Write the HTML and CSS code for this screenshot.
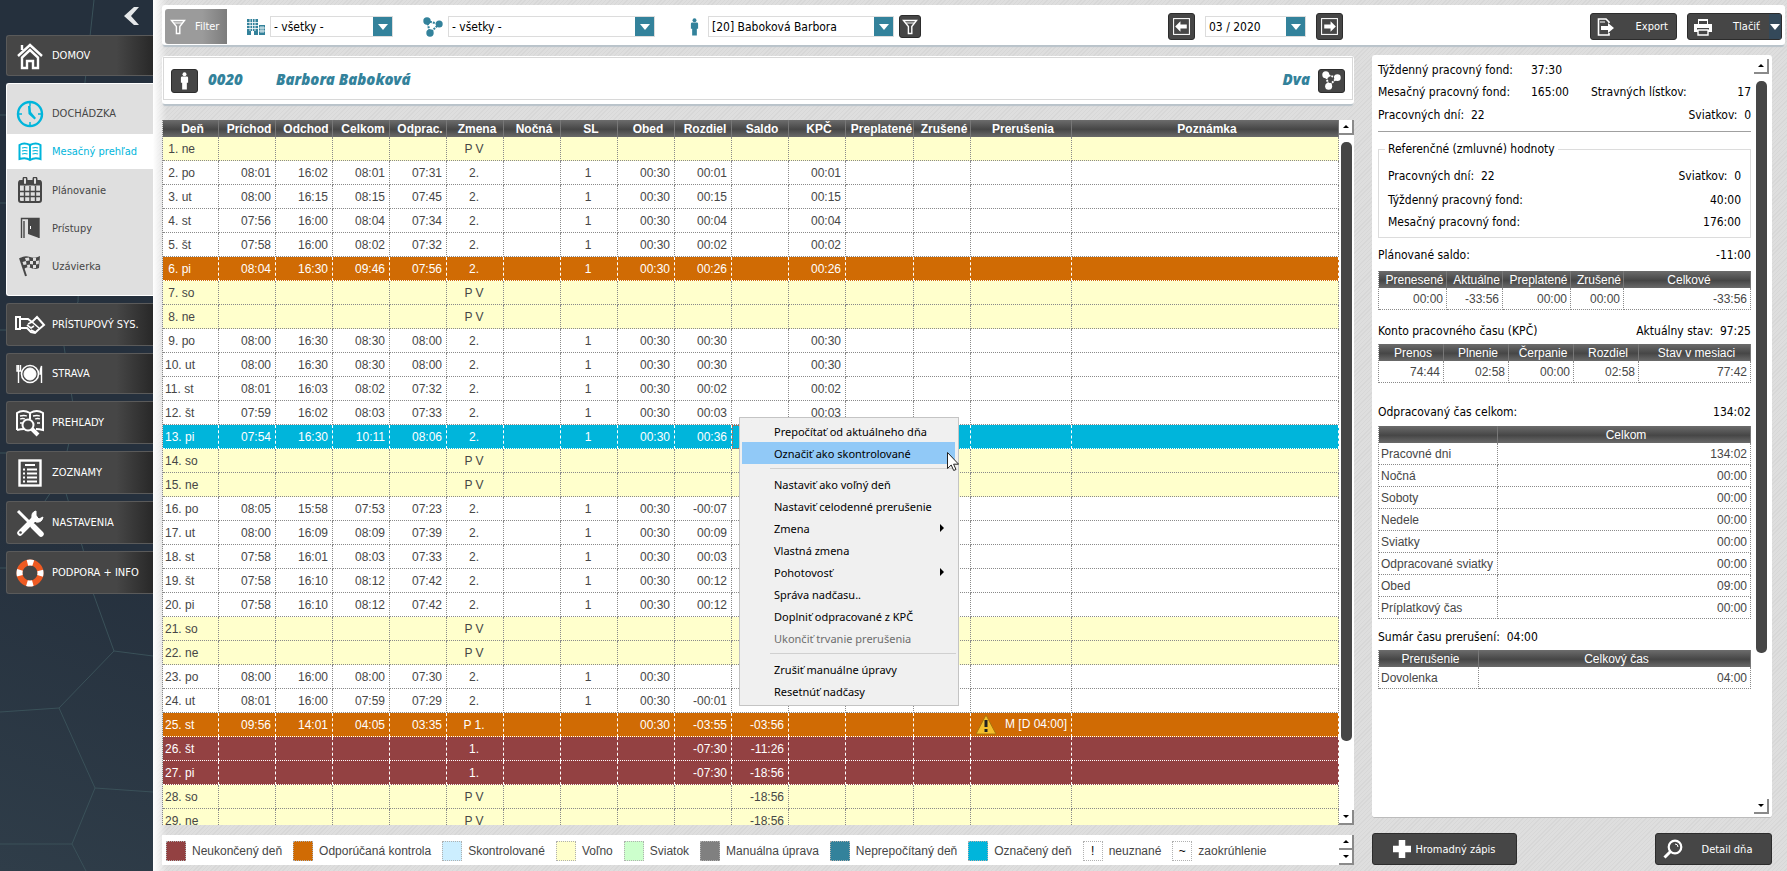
FILE: index.html
```html
<!DOCTYPE html>
<html lang="sk">
<head>
    <meta charset="UTF-8">
    <title>Mesačný prehľad</title>
    <link rel="stylesheet" href="styles.css">
    <script src="script.js" defer></script>
</head>
<body>
    <svg class="symbols" width="0" height="0">
        <symbol id="funnel" viewBox="0 0 16 16">
            <path d="M1.5 1.5h13L9.8 7.5v7H6.4v-7z" fill="none" stroke="currentColor" stroke-width="1.4"/>
            <path d="M4 4h8" stroke="currentColor" stroke-width="1"/>
        </symbol>
        <symbol id="person" viewBox="0 0 10 20">
            <circle cx="5" cy="2.4" r="2.2" fill="currentColor"/>
            <path d="M2.5 5h5Q9 5 9 6.500V12H7.600V19.500H2.400V12H1V6.500Q1 5 2.500 5z" fill="currentColor"/>
        </symbol>
        <symbol id="nodes" viewBox="0 0 20 20">
            <path d="M4 4L16 7L7 16L4 4" fill="none" stroke="currentColor" stroke-width="2" stroke-dasharray="2 1"/>
            <circle cx="4" cy="4" r="3.700" fill="currentColor"/>
            <circle cx="16.200" cy="7" r="3.500" fill="currentColor"/>
            <circle cx="7" cy="16" r="3.700" fill="currentColor"/>
        </symbol>
        <symbol id="arrow" viewBox="0 0 18 18">
            <rect x="1.500" y="1.500" width="15" height="15" fill="none" stroke="currentColor"/>
            <path d="M3 9l5-5v3h6v4H8v3z" fill="currentColor"/>
        </symbol>
    </svg>

    <div class="app">
        <nav class="sidebar">
            <svg class="pattern" width="153" height="871" viewBox="0 0 153 871">
                <path d="M94 0l-9 82-7 220-17 25 14 90-14 60-20 30M61 477l22 72 10 45M0 115h10M0 203h8M0 330h12M0 453h10M0 568h12M92 590l22 61 39 5M114 651l-55 57 36 80-23 56 14 27M0 712l59-4M95 788l58 4M0 844h72"/>
            </svg>
            <button class="collapse" aria-label="Skryť menu">
                <svg width="16" height="18" viewBox="0 0 16 18"><path d="M15 0H10L0 9l10 9h5L7 9z" fill="#e6e8ea"/></svg>
            </button>

            <a href="#" class="item short">
                <svg width="28" height="28" viewBox="0 0 28 28" fill="none" stroke="#fff" stroke-width="2.400">
                    <path d="M2 14L14 3l12 11M6 8V3M14 8L6 15.500V26h5v-7h6v7h5V15.500z"/>
                </svg>
                <span>DOMOV</span>
            </a>

            <div class="group">
                <a href="#" class="grouphead">
                    <svg width="28" height="28" viewBox="0 0 28 28" fill="none" stroke="#00b5db" stroke-width="2.400">
                        <circle cx="14" cy="14" r="12"/>
                        <path d="M14 2v4M14 22v4M2 14h4M22 14h4" stroke-width="1.500"/>
                        <path d="M12 6h2.500l.5 6 5 6-1.500 1.500L12.500 14z" fill="#00b5db" stroke="none"/>
                    </svg>
                    <span>DOCHÁDZKA</span>
                </a>
                <a href="#" class="sub active">
                    <svg width="24" height="20" viewBox="0 0 24 20" fill="none" stroke="currentColor" stroke-width="2">
                        <path d="M1.500 17V3Q6 0 12 3 18 0 22.500 3v14q-6-2-10.500 1Q8 15 1.500 17zM12 3v14"/>
                        <path d="M4 6q3-1 5.500 0M4 9q3-1 5.500 0M4 12q3-1 5.500 0M14.500 6q3-1 5.500 0M14.500 9q3-1 5.500 0M14.500 12q3-1 5.500 0" stroke-width="1.200"/>
                    </svg>
                    <span>Mesačný prehľad</span>
                </a>
                <a href="#" class="sub">
                    <svg width="24" height="26" viewBox="0 0 24 26" fill="none" stroke="#464646">
                        <rect x="1" y="4" width="22" height="21" rx="2" stroke-width="2"/>
                        <path d="M1 6h22" stroke-width="5"/>
                        <path d="M1 14.500h22M1 19.500h22M6.500 9v16M12 9v16M17.500 9v16" stroke-width="1.400"/>
                        <path d="M7 2v4M17 2v4" stroke-width="5" stroke-linecap="round"/>
                        <path d="M7 2v4M17 2v4" stroke="#dfdfdf" stroke-width="2" stroke-linecap="round"/>
                    </svg>
                    <span>Plánovanie</span>
                </a>
                <a href="#" class="sub">
                    <svg width="24" height="22" viewBox="0 0 24 22">
                        <path d="M3.500 21V1.500H21V21M6 21V4" fill="none" stroke="#464646" stroke-width="1.400"/>
                        <path d="M10 2h11v19l-11-4z" fill="#464646"/><path d="M12.500 9v3" stroke="#fff"/>
                    </svg>
                    <span>Prístupy</span>
                </a>
                <a href="#" class="sub">
                    <svg width="24" height="22" viewBox="0 0 24 22">
                        <path d="M2 3q5-3 10-1t10-1l-1 12q-4 2-8 0t-7 1z" fill="#464646"/>
                        <path d="M2 3l6 18" stroke="#464646" stroke-width="2"/>
                        <path d="M7 3l4-.5.5 3L8 6zM15 3l3-.3v3l-3 .3zM4.500 7L8 6l.5 3.500-3 .5zM12 6h3v3.500l-3-.5zM18 6l3-.5-.3 3.500-2.700.5zM9 10l3-.5v3L9.500 13zM15 10h3v3l-3 .5z" fill="#dfdfdf"/>
                    </svg>
                    <span>Uzávierka</span>
                </a>
            </div>

            <a href="#" class="item">
                <svg width="32" height="20" viewBox="0 0 32 20" fill="none" stroke="#fff" stroke-width="2">
                    <path d="M2 2h4v12H2zM6 4h8l4 3 5-5 7 8-6 5-3 3-4-1-4-4H6"/>
                    <path d="M14 9l4-2 7 6M13 10l4 3 3-2M17 15l4 2" stroke-width="1.600"/>
                </svg>
                <span>PRÍSTUPOVÝ SYS.</span>
            </a>
            <a href="#" class="item short">
                <svg width="28" height="20" viewBox="0 0 28 20" fill="none" stroke="#fff">
                    <circle cx="14" cy="10" r="8.500" stroke-width="1.600"/><circle cx="14" cy="10" r="6" fill="#fff"/>
                    <path d="M2.500 1v18M1 1v6h3.500V1M25.500 19V2q-1.500 3-1.500 8h2" stroke-width="1.400"/>
                </svg>
                <span>STRAVA</span>
            </a>
            <a href="#" class="item">
                <svg width="30" height="28" viewBox="0 0 30 28" fill="none" stroke="#fff" stroke-width="2">
                    <path d="M2 21V4q6-4 13 0 7-4 13 0v17q-4-1-7-1M2 21q4-1 7-1M15 4v6"/>
                    <path d="M5 7q4-1 7 0M5 10q3-1 5 0M18 7q4-1 7 0M20 10q3-1 5 0M22 14h3M5 14h2" stroke-width="1.300"/>
                    <circle cx="13" cy="16" r="5.500"/><path d="M17 20l6 6" stroke-width="4"/>
                </svg>
                <span>PREHĽADY</span>
            </a>
            <a href="#" class="item">
                <svg width="24" height="28" viewBox="0 0 24 28" fill="none" stroke="#fff">
                    <rect x="1.500" y="1.500" width="21" height="25" stroke-width="2.400"/>
                    <path d="M7 6h10M9 10.500h10M9 14.500h10M9 18.500h10M9 22.500h10M5 10.500h2M5 14.500h2M5 18.500h2M5 22.500h2" stroke-width="2"/>
                </svg>
                <span>ZOZNAMY</span>
            </a>
            <a href="#" class="item">
                <svg width="28" height="28" viewBox="0 0 28 28" fill="none" stroke="#fff">
                    <path d="M2 2l13 13" stroke-width="3"/><path d="M17 17l8 8" stroke-width="5.500" stroke-linecap="round"/>
                    <path d="M4 24L19 9" stroke-width="5.500" stroke-linecap="round"/>
                    <path d="M20 2q-5 1-4 7l4 4q6 1 7-5l-4 2-3-3z" fill="#fff"/>
                    <circle cx="4.500" cy="23.500" r="1.300" fill="#464646" stroke="none"/>
                </svg>
                <span>NASTAVENIA</span>
            </a>
            <a href="#" class="item">
                <svg width="28" height="28" viewBox="0 0 28 28" fill="none" stroke-width="6">
                    <circle cx="14" cy="14" r="10.500" stroke="#ee5a22"/>
                    <circle cx="14" cy="14" r="10.500" stroke="#fff" stroke-dasharray="6 10.500" stroke-dashoffset="3"/>
                </svg>
                <span>PODPORA + INFO</span>
            </a>
        </nav>

        <main class="main">
            <header class="topbar">
                <button class="filter"><svg width="16" height="16"><use href="#funnel"/></svg>Filter</button>
                <label class="pick pick1">
                    <svg width="18" height="16" viewBox="0 0 18 16">
                        <path d="M0 0h11v16H0zM12 6h6v10h-6z" fill="#33829b"/>
                        <path d="M0 3.500h11M0 6.500h11M0 9.500h11M12 9h6M12 12h6M3 0v12M5.500 0v12M8 0v12M14 7v7M16 7v7" stroke="#fff" stroke-width=".8"/>
                        <path d="M4 12h3v4H4z" fill="#fff"/>
                    </svg>
                    <span class="combo"><select aria-label="Stredisko"><option>- všetky -</option></select><i></i></span>
                </label>
                <label class="pick pick2">
                    <svg width="20" height="20"><use href="#nodes"/></svg>
                    <span class="combo"><select aria-label="Skupina"><option>- všetky -</option></select><i></i></span>
                </label>
                <label class="pick pick3">
                    <svg width="9" height="18"><use href="#person"/></svg>
                    <span class="combo"><select aria-label="Osoba"><option>[20] Baboková Barbora</option></select><i></i></span>
                </label>
                <button class="dark funnelbtn" aria-label="Filtrovať"><svg width="16" height="16"><use href="#funnel"/></svg></button>
                <div class="month">
                    <button class="dark square" aria-label="Predchádzajúci mesiac"><svg width="19" height="19"><use href="#arrow"/></svg></button>
                    <span class="combo"><select aria-label="Mesiac"><option>03 / 2020</option></select><i></i></span>
                    <button class="dark square next" aria-label="Ďalší mesiac"><svg width="19" height="19"><use href="#arrow"/></svg></button>
                </div>
                <div class="actions">
                    <button class="dark export">
                        <svg width="18" height="18" viewBox="0 0 18 18">
                            <path d="M12 5V4L9 1H1.500v16H12v-2" fill="none" stroke="#fff" stroke-width="1.600"/><path d="M3 4h5" stroke="#fff"/>
                            <path d="M4 8h7V5l6 5-6 5v-3H4z" fill="#fff"/>
                        </svg>
                        <span>Export</span>
                    </button>
                    <button class="dark print">
                        <svg width="18" height="18" viewBox="0 0 18 18">
                            <path d="M4 1h10v5H4zM0 6h18v8H0z" fill="#fff"/><path d="M5 3h8v3H5zM3 10h12v2H3z" fill="#464646"/><path d="M4 12h10v5H4z" fill="#464646" stroke="#fff" stroke-width="1.400"/>
                        </svg>
                        <span>Tlačiť</span>
                        <i></i>
                    </button>
                </div>
            </header>

            <div class="content">
                <section class="month-view">
                    <div class="namecard">
                        <div class="inner">
                            <button class="dark small" aria-label="Osoba"><svg width="9" height="18"><use href="#person"/></svg></button>
                            <b class="number">0020</b>
                            <b>Barbora Baboková</b>
                            <b class="shift">Dva</b>
                            <button class="dark small" aria-label="Skupina"><svg width="19" height="19"><use href="#nodes"/></svg></button>
                        </div>
                    </div>

                    <div class="sheet">
                        <div class="rows">
                            <table class="days">
                                <colgroup>
                                    <col class="w56"><col span="11" class="w57"><col class="w68"><col class="w57"><col class="w101"><col>
                                </colgroup>
                                <thead>
                                    <tr>
                                        <th>Deň</th><th>Príchod</th><th>Odchod</th><th>Celkom</th><th>Odprac.</th><th>Zmena</th><th>Nočná</th><th>SL</th>
                                        <th>Obed</th><th>Rozdiel</th><th>Saldo</th><th>KPČ</th><th>Preplatené</th><th>Zrušené</th><th>Prerušenia</th><th>Poznámka</th>
                                    </tr>
                                </thead>
                                <tbody id="days"></tbody>
                            </table>
                        </div>
                        <div class="scroll">
                            <span class="sbtn up"></span>
                            <span class="thumb"></span>
                            <span class="sbtn down"></span>
                        </div>

                        <div class="menu" role="menu">
                            <button role="menuitem">Prepočítať od aktuálneho dňa</button>
                            <button role="menuitem" class="hot">Označiť ako skontrolované</button>
                            <hr>
                            <button role="menuitem">Nastaviť ako voľný deň</button>
                            <button role="menuitem">Nastaviť celodenné prerušenie</button>
                            <button role="menuitem" class="more">Zmena</button>
                            <button role="menuitem">Vlastná zmena</button>
                            <button role="menuitem" class="more">Pohotovosť</button>
                            <button role="menuitem">Správa nadčasu..</button>
                            <button role="menuitem">Doplniť odpracované z KPČ</button>
                            <button role="menuitem" disabled>Ukončiť trvanie prerušenia</button>
                            <hr>
                            <button role="menuitem">Zrušiť manuálne úpravy</button>
                            <button role="menuitem">Resetnúť nadčasy</button>
                            <svg class="pointer" width="12" height="19" viewBox="0 0 12 19"><path d="M.5.5v16l3.700-3.500 2.500 5.500 2.300-1-2.400-5.300h5z" fill="#fff" stroke="#222"/></svg>
                        </div>
                    </div>

                    <footer class="legend">
                        <ul>
                            <li><i class="unfinished"></i>Neukončený deň</li>
                            <li><i class="check"></i>Odporúčaná kontrola</li>
                            <li><i class="checked"></i>Skontrolované</li>
                            <li><i class="free"></i>Voľno</li>
                            <li><i class="holiday"></i>Sviatok</li>
                            <li><i class="manual"></i>Manuálna úprava</li>
                            <li><i class="recalc"></i>Neprepočítaný deň</li>
                            <li><i class="selected"></i>Označený deň</li>
                            <li><i>!</i>neuznané</li>
                            <li><i>~</i>zaokrúhlenie</li>
                        </ul>
                        <div class="scroll"><span class="sbtn up"></span><span class="sbtn down"></span></div>
                    </footer>
                </section>

                <aside class="summary">
                    <div class="panel">
                        <div class="info">
                            <p><span class="lead">Týždenný pracovný fond:</span><span>37:30</span></p>
                            <p><span class="lead">Mesačný pracovný fond:</span><span class="fund">165:00</span><span>Stravných lístkov:</span><span class="end">17</span></p>
                            <p class="tall"><span>Pracovných dní:&nbsp; 22</span><span class="end">Sviatkov:&nbsp; 0</span></p>
                            <fieldset>
                                <legend>Referenčné (zmluvné) hodnoty</legend>
                                <p class="tall"><span>Pracovných dní:&nbsp; 22</span><span class="end">Sviatkov:&nbsp; 0</span></p>
                                <p><span>Týždenný pracovný fond:</span><span class="end">40:00</span></p>
                                <p><span>Mesačný pracovný fond:</span><span class="end">176:00</span></p>
                            </fieldset>
                            <p class="head"><span>Plánované saldo:</span><span class="end">-11:00</span></p>
                            <table>
                                <colgroup><col class="w68"><col class="w56"><col class="w68"><col class="w53"><col></colgroup>
                                <tr><th>Prenesené</th><th>Aktuálne</th><th>Preplatené</th><th>Zrušené</th><th>Celkové</th></tr>
                                <tr><td>00:00</td><td>-33:56</td><td>00:00</td><td>00:00</td><td>-33:56</td></tr>
                            </table>
                            <p class="head kpc"><span>Konto pracovného času (KPČ)</span><span class="end">Aktuálny stav:&nbsp; 97:25</span></p>
                            <table>
                                <colgroup><col span="4" class="w65"><col></colgroup>
                                <tr><th>Prenos</th><th>Plnenie</th><th>Čerpanie</th><th>Rozdiel</th><th>Stav v mesiaci</th></tr>
                                <tr><td>74:44</td><td>02:58</td><td>00:00</td><td>02:58</td><td>77:42</td></tr>
                            </table>
                            <p class="head worked"><span>Odpracovaný čas celkom:</span><span class="end">134:02</span></p>
                            <table class="named">
                                <colgroup><col class="w119"><col></colgroup>
                                <tr><th></th><th>Celkom</th></tr>
                                <tr><td>Pracovné dni</td><td>134:02</td></tr>
                                <tr><td>Nočná</td><td>00:00</td></tr>
                                <tr><td>Soboty</td><td>00:00</td></tr>
                                <tr><td>Nedele</td><td>00:00</td></tr>
                                <tr><td>Sviatky</td><td>00:00</td></tr>
                                <tr><td>Odpracované sviatky</td><td>00:00</td></tr>
                                <tr><td>Obed</td><td>09:00</td></tr>
                                <tr><td>Príplatkový čas</td><td>00:00</td></tr>
                            </table>
                            <p class="head breaks"><span>Sumár času prerušení:&nbsp; 04:00</span></p>
                            <table class="named">
                                <colgroup><col class="w100"><col></colgroup>
                                <tr><th>Prerušenie</th><th>Celkový čas</th></tr>
                                <tr><td>Dovolenka</td><td>04:00</td></tr>
                            </table>
                        </div>
                        <div class="scroll">
                            <span class="sbtn up"></span>
                            <span class="thumb"></span>
                            <span class="sbtn down"></span>
                        </div>
                    </div>
                    <div class="buttons">
                        <button class="dark bulk">
                            <svg width="18" height="18" viewBox="0 0 18 18"><path d="M9 0v18M0 9h18" stroke="#fff" stroke-width="6.500"/></svg>
                            Hromadný zápis
                        </button>
                        <button class="dark detail">
                            <svg width="20" height="20" viewBox="0 0 20 20" fill="none" stroke="#fff">
                                <circle cx="12" cy="8" r="6.300" stroke-width="2.200"/><path d="M7.500 12.500L1.500 18.500" stroke-width="3"/><path d="M12 5q3 0 3 3"/>
                            </svg>
                            <span>Detail dňa</span>
                        </button>
                    </div>
                </aside>
            </div>
        </main>
    </div>
</body>
</html>
```
FILE: styles.css
```css
* {
    box-sizing: border-box;
}

body {
    margin: 0;
    font-family: Tahoma, "DejaVu Sans Condensed", "Noto Sans", sans-serif;
    font-size: 12px;
    color: #000;
}

button, select {
    font: inherit;
    margin: 0;
    padding: 0;
    border: none;
}

a {
    text-decoration: none;
    color: inherit;
}

svg {
    flex: none;
}

.symbols {
    position: absolute;
}

.app {
    display: flex;
    height: 100vh;
    overflow: hidden;
}

/* sidebar */
.sidebar {
    position: relative;
    flex: none;
    width: 153px;
    padding-left: 6px;
    background: linear-gradient(20deg, #2f3d49, #25303d 40%);
    font-size: 11px;
    overflow: hidden;
}

.pattern {
    position: absolute;
    left: 0;
    top: 0;
    fill: none;
    stroke: #3a5159;
}

.collapse {
    position: relative;
    display: block;
    height: 35px;
    padding-right: 13px;
    margin-left: auto;
    background: none;
}

.item {
    position: relative;
    display: flex;
    align-items: center;
    height: 43px;
    margin-bottom: 7px;
    border: 1px solid #5a5a5a;
    border-right: none;
    border-radius: 3px 0 0 3px;
    background: linear-gradient(to right, #464646 75%, #282828);
    color: #fff;
}

.item.short {
    height: 41px;
}

.item svg, .group svg {
    margin: 0 auto;
}

.item span, .group span {
    width: 101px;
    white-space: nowrap;
}

.group {
    position: relative;
    height: 213px;
    margin-bottom: 7px;
    border: 1px solid #fff;
    border-right: none;
    border-radius: 3px 0 0 3px;
    background: #dfdfdf;
    color: #464646;
}

.grouphead, .sub {
    display: flex;
    align-items: center;
    height: 38px;
}

.grouphead {
    height: 50px;
    padding-top: 9px;
}

.sub.active {
    height: 35px;
    margin-bottom: 2px;
    background: #fff;
    color: #00b5db;
}

/* main area */
.main {
    flex: 1;
    min-width: 0;
    display: flex;
    flex-direction: column;
    padding: 5px 2px 6px 9px;
    background:
        linear-gradient(to right, #fff, rgba(255, 255, 255, 0) 14px),
        repeating-linear-gradient(135deg, #dedede 0, #dedede 2px, #d7d7d7 2px, #d7d7d7 3px);
}

.topbar {
    flex: none;
    display: flex;
    align-items: center;
    height: 40px;
    padding: 3px 3px 0;
    background: #fff;
    border-radius: 3px;
    box-shadow: 0 3px 1px -1px #b9c3ca;
}

.filter {
    display: flex;
    align-items: center;
    gap: 9px;
    width: 62px;
    height: 35px;
    padding-left: 5px;
    border-radius: 3px 0 0 3px;
    background: linear-gradient(to right, #9b9b9b 60%, #7c7c7c);
    color: #fff;
    font-size: 11px;
}

.pick {
    display: flex;
    align-items: center;
    gap: 5px;
    color: #33829b;
}

.combo {
    display: flex;
    height: 21px;
    border: 1px solid #dcdcdc;
}

.combo select {
    flex: 1;
    min-width: 0;
    padding-left: 3px;
    appearance: none;
    background: #fff;
    color: #000;
}

.combo i {
    display: flex;
    align-items: center;
    justify-content: center;
    width: 19px;
    background: #33829b;
}

.combo i::after, .print i::after {
    content: "";
    border: 5px solid transparent;
    border-top: 6px solid #fff;
    border-bottom: none;
}

.pick1 { margin-left: 20px; }
.pick1 .combo { width: 123px; }
.pick2 { margin-left: 30px; }
.pick2 .combo { width: 207px; }
.pick3 { margin-left: 35px; gap: 9px; }
.pick3 .combo { width: 186px; }

.dark {
    display: flex;
    align-items: center;
    justify-content: center;
    border: 1px solid #2c2c2c;
    border-radius: 3px;
    background: #464646;
    color: #fff;
    font-size: 11px;
}

.funnelbtn {
    width: 22px;
    height: 23px;
    margin-left: 5px;
}

.month {
    display: flex;
    align-items: center;
    gap: 10px;
    margin-left: auto;
}

.month .combo {
    width: 101px;
}

.square {
    width: 27px;
    height: 27px;
}

.next svg {
    transform: rotate(180deg);
}

.actions {
    display: flex;
    gap: 10px;
    margin-left: 247px;
}

.actions .dark {
    height: 27px;
    justify-content: space-between;
    padding-left: 6px;
}

.actions .export {
    width: 87px;
    padding-right: 8px;
}

.print {
    width: 95px;
}

.print span {
    margin-left: 12px;
}

.print i {
    display: flex;
    align-items: center;
    justify-content: center;
    align-self: stretch;
    width: 12px;
    background: #34495a;
}

.content {
    flex: 1;
    min-height: 0;
    display: flex;
    gap: 18px;
    padding: 10px 13px 0 0;
}

.month-view {
    flex: 1;
    min-width: 0;
    display: flex;
    flex-direction: column;
}

.namecard {
    flex: none;
    height: 48px;
    margin: 1px 0 16px;
    padding: 1px 1px 3px;
    background: #fff;
    border-radius: 3px;
    box-shadow: 0 3px 1px -1px #b9c3ca;
}

.inner {
    display: flex;
    align-items: center;
    height: 43px;
    padding: 4px 7px 0;
    border: 1px solid #d8d8d8;
    color: #33829b;
    font: italic bold 15px/20px "Noto Sans", sans-serif;
}

.inner b {
    padding-bottom: 4px;
}

.small {
    width: 27px;
    height: 24px;
}

.number {
    width: 68px;
    margin-left: 10px;
}

.shift {
    margin: 0 8px 0 auto;
}

/* tables */
.sheet {
    position: relative;
    flex: 1;
    min-height: 0;
    display: flex;
}

.rows {
    flex: 1;
    min-width: 0;
    overflow: hidden;
}

table {
    width: 100%;
    table-layout: fixed;
    border-spacing: 0;
    border-left: 1px dotted #8a8a8a;
    font-family: "Liberation Sans", Arial, sans-serif;
    font-size: 12px;
    color: #464646;
}

.w53 { width: 53px; }
.w56 { width: 56px; }
.w57 { width: 57px; }
.w65 { width: 65px; }
.w68 { width: 68px; }
.w100 { width: 100px; }
.w101 { width: 101px; }
.w119 { width: 119px; }

th {
    height: 17px;
    padding: 0 0 0 4px;
    border-right: 1px solid #777;
    background: linear-gradient(#6c6c6c, #464646 55%, #6a6a6a);
    color: #fff;
    line-height: 16px;
    font-weight: normal;
    white-space: nowrap;
}

td {
    height: 22px;
    padding: 0 3px;
    border-right: 1px dotted #8a8a8a;
    border-bottom: 1px dotted #8a8a8a;
    line-height: 20px;
    text-align: right;
    white-space: nowrap;
}

.days th {
    font-weight: bold;
}

.days td {
    height: 24px;
    padding: 0 4px;
    background: #fff;
}

.named td:first-child {
    padding-left: 2px;
    text-align: left;
}

.days td:first-child {
    padding-left: 2px;
    text-align: left;
}

.days td:nth-child(6), .days td:nth-child(8) {
    padding-right: 6px;
    text-align: center;
}

.days .free td {
    background: #ffffcc;
}

.days .check td {
    background: #d06b04;
}

.days .unfinished td {
    background: #934142;
}

.days .selected td {
    background: #00b5db;
}

.days .check td, .days .unfinished td, .days .selected td {
    border-color: #fff;
    border-right-style: dashed;
    color: #fff;
}

.days .selected td:nth-child(11) {
    outline: 1px dotted #e0552b;
    outline-offset: -1px;
}

.warn {
    float: left;
}

.scroll {
    flex: none;
    display: flex;
    flex-direction: column;
    width: 15px;
    background: #fff;
}

.sbtn {
    display: flex;
    align-items: center;
    justify-content: center;
    height: 15px;
    border-right: 2px solid #8a8a8a;
    border-bottom: 2px solid #8a8a8a;
    background: #fff;
}

.sbtn::after {
    content: "";
    border: 3px solid transparent;
    border-top: none;
    border-bottom: 3px solid #000;
}

.sbtn.down {
    margin-top: auto;
}

.sbtn.down::after {
    border-top: 3px solid #000;
    border-bottom: none;
}

.thumb {
    width: 11px;
    height: 85%;
    margin: 7px 2px 0;
    border-radius: 5px;
    background: #464646;
}

/* context menu */
.menu {
    position: absolute;
    left: 577px;
    top: 297px;
    width: 220px;
    padding: 2px 2px 3px;
    border: 1px solid #c4c4c4;
    background: #f0f0f0;
    font-family: "Segoe UI", "Noto Sans", sans-serif;
    font-size: 11px;
}

.menu button {
    display: flex;
    align-items: center;
    justify-content: space-between;
    width: 213px;
    height: 22px;
    padding: 0 11px 0 32px;
    background: none;
    color: #000;
    white-space: nowrap;
}

.menu .hot {
    background: #91c9f7;
}

.menu button:disabled {
    color: #6d6d6d;
}

.menu .more::after {
    content: "";
    border: 4px solid transparent;
    border-left: 4px solid #000;
    border-right: none;
}

.menu hr {
    height: 1px;
    margin: 4px 0 4px 28px;
    border: none;
    background: #d0d0d0;
}

.pointer {
    position: absolute;
    left: 207px;
    top: 34px;
}

/* legend */
.legend {
    flex: none;
    display: flex;
    height: 30px;
    margin-top: 10px;
    background: #fff;
    font-family: "Liberation Sans", Arial, sans-serif;
    color: #464646;
}

.legend ul {
    flex: 1;
    display: flex;
    align-items: center;
    gap: 11px;
    margin: 0;
    padding: 2px 4px 0;
    list-style: none;
}

.legend li {
    display: flex;
    align-items: center;
    gap: 6px;
    white-space: nowrap;
}

.legend i {
    width: 20px;
    height: 20px;
    border: 1px dotted #b0b0b0;
    font-style: normal;
    line-height: 18px;
    text-align: center;
    color: #000;
}

.legend .unfinished { background: #934142; }
.legend .check { background: #d06b04; }
.legend .checked { background: #cceeff; }
.legend .free { background: #ffffcc; }
.legend .holiday { background: #ccffcc; }
.legend .manual { background: #808080; }
.legend .recalc { background: #33829b; }
.legend .selected { background: #00b5db; }

/* summary */
.summary {
    flex: none;
    display: flex;
    flex-direction: column;
    width: 400px;
}

.panel {
    flex: 1;
    min-height: 0;
    display: flex;
    gap: 3px;
    padding: 4px 3px 3px 6px;
    border-bottom: 1px solid #bcbcbc;
    border-radius: 3px;
    background: #fff;
}

.panel .thumb {
    height: 572px;
}

.info {
    flex: 1;
    min-width: 0;
}

.info p {
    display: flex;
    align-items: center;
    height: 22px;
    margin: 0;
    white-space: nowrap;
}

.info .tall {
    height: 26px;
}

.info > .tall {
    height: 29px;
    border-bottom: 1px solid #a0a0a0;
    padding-bottom: 4px;
}

.lead {
    width: 153px;
}

.fund {
    width: 60px;
}

.end {
    margin-left: auto;
}

fieldset {
    margin: 9px 0 6px;
    padding: 6px 9px 4px;
    border: 1px solid #dcdcdc;
}

legend {
    margin-left: -3px;
    padding: 0 3px;
    line-height: 16px;
}

.info .head {
    height: 22px;
    margin-bottom: 5px;
}

.info .kpc {
    margin: 10px 0 2px;
}

.info .worked {
    margin: 18px 0 3px;
}

.info .breaks {
    margin: 7px 0 2px;
}

.buttons {
    display: flex;
    justify-content: space-between;
    margin-top: 15px;
}

.buttons .dark {
    height: 32px;
}

.bulk {
    width: 145px;
    gap: 4px;
}

.detail {
    width: 117px;
    gap: 19px;
    padding-right: 12px;
}
```
FILE: script.js
```js
// class | day | in | out | total | worked | shift | night | SL | lunch | diff | saldo | KPC | paid | cancelled | breaks | note
const DAYS = [
    "free|1. ne|||||P V",
    "|2. po|08:01|16:02|08:01|07:31|2.||1|00:30|00:01||00:01",
    "|3. ut|08:00|16:15|08:15|07:45|2.||1|00:30|00:15||00:15",
    "|4. st|07:56|16:00|08:04|07:34|2.||1|00:30|00:04||00:04",
    "|5. št|07:58|16:00|08:02|07:32|2.||1|00:30|00:02||00:02",
    "check|6. pi|08:04|16:30|09:46|07:56|2.||1|00:30|00:26||00:26",
    "free|7. so|||||P V",
    "free|8. ne|||||P V",
    "|9. po|08:00|16:30|08:30|08:00|2.||1|00:30|00:30||00:30",
    "|10. ut|08:00|16:30|08:30|08:00|2.||1|00:30|00:30||00:30",
    "|11. st|08:01|16:03|08:02|07:32|2.||1|00:30|00:02||00:02",
    "|12. št|07:59|16:02|08:03|07:33|2.||1|00:30|00:03||00:03",
    "selected|13. pi|07:54|16:30|10:11|08:06|2.||1|00:30|00:36",
    "free|14. so|||||P V",
    "free|15. ne|||||P V",
    "|16. po|08:05|15:58|07:53|07:23|2.||1|00:30|-00:07",
    "|17. ut|08:00|16:09|08:09|07:39|2.||1|00:30|00:09",
    "|18. st|07:58|16:01|08:03|07:33|2.||1|00:30|00:03",
    "|19. št|07:58|16:10|08:12|07:42|2.||1|00:30|00:12",
    "|20. pi|07:58|16:10|08:12|07:42|2.||1|00:30|00:12",
    "free|21. so|||||P V",
    "free|22. ne|||||P V",
    "|23. po|08:00|16:00|08:00|07:30|2.||1|00:30",
    "|24. ut|08:01|16:00|07:59|07:29|2.||1|00:30|-00:01",
    "check|25. st|09:56|14:01|04:05|03:35|P 1.|||00:30|-03:55|-03:56||||M [D 04:00]",
    "unfinished|26. št|||||1.||||-07:30|-11:26",
    "unfinished|27. pi|||||1.||||-07:30|-18:56",
    "free|28. so|||||P V|||||-18:56",
    "free|29. ne|||||P V|||||-18:56"
];

const WARN = '<svg class="warn" width="22" height="21" viewBox="0 0 22 21">' +
    '<path d="M11 1L21 20H1z" fill="#f5c02c" stroke="#a8750c" stroke-linejoin="round"/>' +
    '<path d="M11 6v7M11 15v3" stroke="#222" stroke-width="3"/></svg>';

const body = document.getElementById("days");
for (const line of DAYS) {
    const [cls, ...cells] = line.split("|");
    const tr = document.createElement("tr");
    if (cls) tr.className = cls;
    for (let i = 0; i < 16; i++) {
        const td = document.createElement("td");
        let text = cells[i] || "";
        // one-digit days are padded so that they line up with the others
        if (i == 0 && text.indexOf(".") == 1) text = "\u00a0" + text;
        td.textContent = text;
        if (i == 14 && text) td.insertAdjacentHTML("afterbegin", WARN);
        tr.appendChild(td);
    }
    body.appendChild(tr);
}
```
